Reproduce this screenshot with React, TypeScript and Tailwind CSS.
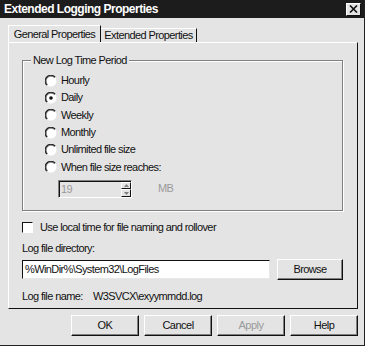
import React from "react";

const font = { fontFamily: '"Liberation Sans", Arial, sans-serif' };

function Radio({ checked }: { checked?: boolean }) {
  return (
    <svg width="12" height="12" viewBox="0 0 12 12" className="shrink-0">
      <circle cx="6" cy="6" r="5.5" fill="#ffffff" />
      <path d="M10 2.2 A5.5 5.5 0 0 0 2 10" fill="none" stroke="#1a1a1a" strokeWidth="1.6" />
      <path d="M9.6 2.6 A5 5 0 0 0 2.4 9.6" fill="none" stroke="#808080" strokeWidth="0.8" />
      {checked && <circle cx="6" cy="6" r="1.8" fill="#111111" />}
    </svg>
  );
}

function Btn({ label, disabled }: { label: string; disabled?: boolean }) {
  return (
    <button
      className={
        "h-[21px] w-[68px] border border-t-white border-l-white border-r-[#111] border-b-[#111] bg-[#e4e4e4] text-[11px] tracking-[-0.5px] shadow-[inset_-1px_-1px_0_#808080] " +
        (disabled ? "text-[#9a9a9a]" : "text-[#111]")
      }
    >
      {label}
    </button>
  );
}

export default function App() {
  const periods = ["Hourly", "Daily", "Weekly", "Monthly", "Unlimited file size", "When file size reaches:"];

  return (
    <div style={font} className="h-[346px] w-[365px] overflow-hidden bg-[#e4e4e4] text-[11px] leading-[13px] tracking-[-0.6px] text-[#111] border-r border-b border-r-[#222] border-b-[#222]">
      {/* Titelleiste */}
      <div className="flex h-[18px] items-center justify-between bg-[#1c1c1c] pl-[4px] pr-[3px]">
        <span className="text-[12px] font-bold tracking-[-0.5px] text-white">Extended Logging Properties</span>
        <div className="flex h-[13px] w-[15px] items-center justify-center border border-t-white border-l-white border-r-[#111] border-b-[#111] bg-[#e4e4e4]">
          <svg width="9" height="8" viewBox="0 0 9 8">
            <path d="M1 0.5 L8 7.5 M8 0.5 L1 7.5" stroke="#111" strokeWidth="1.6" />
          </svg>
        </div>
      </div>

      {/* Reiter */}
      <div className="flex items-end pl-[8px] pt-[7px]">
        <div className="flex h-[17px] w-[93px] items-center justify-center whitespace-nowrap border-l border-t border-r border-l-white border-t-white border-r-[#111]">
          General Properties
        </div>
        <div className="flex h-[14px] w-[96px] items-center justify-center whitespace-nowrap border-t border-r border-t-white border-r-[#111]">
          Extended Properties
        </div>
      </div>

      {/* Panel */}
      <div className="ml-[8px] h-[267px] w-[350px] border-l border-t border-r border-b border-l-white border-t-white border-r-[#111] border-b-[#111] px-[13px] pt-[17px]">
        <div className="relative h-[151px] w-[321px] border border-[#808080] shadow-[inset_1px_1px_0_#fff,1px_1px_0_#fff]">
          <span className="absolute left-[8px] top-[-7px] whitespace-nowrap bg-[#e4e4e4] px-[2px]">New Log Time Period</span>
          <div className="flex flex-col pl-[22px] pt-[11px]">
            {periods.map((p, i) => (
              <div key={p} className="flex h-[17.3px] items-center gap-[4px]">
                <Radio checked={i === 1} />
                <span>{p}</span>
              </div>
            ))}
            <div className="mt-[4px] flex items-center pl-[13px]">
              <div className="flex h-[18px] w-[74px] border border-t-[#808080] border-l-[#808080] border-r-white border-b-white">
                <div className="flex-1 border-l border-t border-l-[#111] border-t-[#111] pl-[1px] leading-[15px] text-[#9a9a9a]">19</div>
                <div className="flex w-[10px] flex-col border-t border-t-[#111]">
                  <div className="flex flex-1 items-center justify-center border border-t-white border-l-white border-r-[#111] border-b-[#111]">
                    <svg width="5" height="3" viewBox="0 0 5 3"><path d="M0 3 L2.5 0 L5 3Z" fill="#808080" /></svg>
                  </div>
                  <div className="flex flex-1 items-center justify-center border border-t-white border-l-white border-r-[#111] border-b-[#111]">
                    <svg width="5" height="3" viewBox="0 0 5 3"><path d="M0 0 L2.5 3 L5 0Z" fill="#808080" /></svg>
                  </div>
                </div>
              </div>
              <span className="ml-[26px] text-[#9a9a9a]">MB</span>
            </div>
          </div>
        </div>

        <div className="mt-[10px] flex items-center gap-[7px]">
          <div className="h-[11px] w-[11px] border border-t-[#111] border-l-[#111] border-r-white border-b-white bg-white" />
          <span>Use local time for file naming and rollover</span>
        </div>

        <div className="mt-[8px]">Log file directory:</div>

        <div className="mt-[4px] flex items-center">
          <div className="h-[19px] w-[248px] border border-t-[#111] border-l-[#111] border-r-[#e8e8e8] border-b-[#e8e8e8] bg-white pl-[2px] leading-[17px]">
            %WinDir%\System32\LogFiles
          </div>
          <div className="ml-[7px] flex h-[21px] w-[66px] items-center justify-center border border-t-white border-l-white border-r-[#111] border-b-[#111] shadow-[inset_-1px_-1px_0_#808080]">
            Browse
          </div>
        </div>

        <div className="mt-[10px] flex">
          <span className="w-[71px]">Log file name:</span>
          <span>W3SVCX\exyymmdd.log</span>
        </div>
      </div>

      {/* Schaltflächen */}
      <div className="mt-[6px] flex justify-end gap-[5px] pr-[6px]">
        <Btn label="OK" />
        <Btn label="Cancel" />
        <Btn label="Apply" disabled />
        <Btn label="Help" />
      </div>
    </div>
  );
}
